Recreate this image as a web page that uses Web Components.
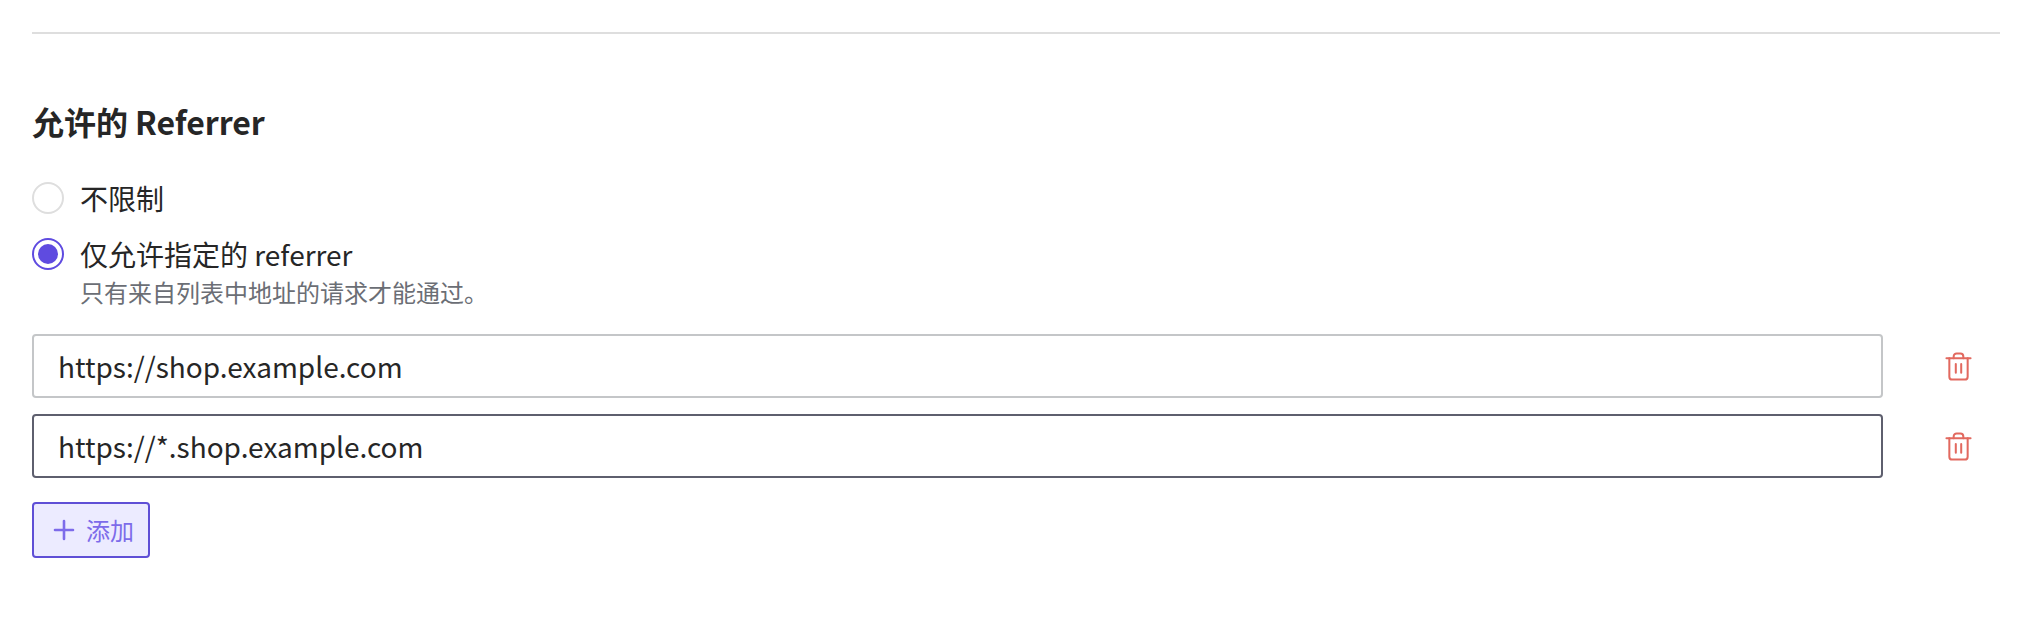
<!DOCTYPE html>
<html lang="zh">
<head>
<meta charset="utf-8">
<style>
html,body{margin:0;background:#fff;}
body{font-family:"Noto Sans CJK SC","Noto Sans",sans-serif;color:#262626;}
</style>
</head>
<body>
<referrer-panel>
  <span slot="title">允许的 Referrer</span>
  <x-radio>不限制</x-radio>
  <x-radio checked hint="只有来自列表中地址的请求才能通过。">仅允许指定的 referrer</x-radio>
  <x-url-row value="https://shop.example.com"></x-url-row>
  <x-url-row value="https://*.shop.example.com" focused></x-url-row>
  <x-add-button>添加</x-add-button>
</referrer-panel>
<script>
class Base extends HTMLElement{
  render(html){ (this.shadowRoot||this.attachShadow({mode:'open'})).innerHTML=html; }
}
customElements.define('referrer-panel',class extends Base{
  connectedCallback(){this.render(`<style>
    :host{display:block;padding:32px 32px 0;box-sizing:border-box;width:2032px;height:630px}
    hr{border:0;height:2px;background:#dedede;margin:0}
    h2{margin:64px 0 0;font-size:32px;line-height:46px;font-weight:600;color:#262626;letter-spacing:-.05px}
    .list{display:flex;flex-direction:column;margin-top:34px}
  </style><hr><h2><slot name="title"></slot></h2><div class="list"><slot></slot></div>`);}
});
customElements.define('x-radio',class extends Base{
  connectedCallback(){
    const c=this.hasAttribute('checked'),h=this.getAttribute('hint');
    this.render(`<style>
    :host{display:grid;grid-template-columns:32px 1fr;column-gap:16px;margin-bottom:${h?26:16}px;font-size:28px;line-height:40px;color:#262626}
    .dot{width:32px;height:32px;box-sizing:border-box;border-radius:50%;align-self:center;background:#fff;
      border:2.5px solid ${c?'#5f4be0':'#dedede'};display:flex;align-items:center;justify-content:center}
    .dot i{width:20px;height:20px;border-radius:50%;background:#5f4be0}
    .hint{grid-column:2;font-size:24px;line-height:32px;color:#6b6e75;margin-top:2px}
    </style><span class="dot">${c?'<i></i>':''}</span><span class="label"><slot></slot></span>${h?`<span class="hint">${h}</span>`:''}`);
  }
});
customElements.define('x-url-row',class extends Base{
  connectedCallback(){
    const f=this.hasAttribute('focused');
    this.render(`<style>
    :host{display:flex;align-items:center;margin-bottom:16px}
    .box{flex:0 0 1851px;height:64px;box-sizing:border-box;border:2.5px solid ${f?'#5e5f6e':'#c4c6c8'};border-radius:4px;
      padding:0 24px;font-size:28px;display:flex;align-items:center;color:#262626;background:#fff}
    .btn{margin-left:62px;display:flex}
    svg{display:block}
    </style><div class="box">${this.getAttribute('value')}</div>
    <div class="btn"><svg width="27" height="29" viewBox="0 0 28 30" fill="none" stroke="#e2695f" stroke-width="2.1" stroke-linecap="round" stroke-linejoin="round">
    <path d="M1.5 6.5H26.5"/><path d="M9 6.5V4.5C9 2.5 10.5 1.5 12 1.5H16C17.5 1.5 19 2.5 19 4.5V6.5"/>
    <path d="M4.5 6.5V25.5C4.5 27.2 5.6 28.5 7.5 28.5H20.5C22.4 28.5 23.5 27.2 23.5 25.5V6.5"/>
    <path d="M11.2 12.5V21.5"/><path d="M16.8 12.5V21.5"/></svg></div>`);
  }
});
customElements.define('x-add-button',class extends Base{
  connectedCallback(){this.render(`<style>
    :host{display:inline-flex;align-self:flex-start;align-items:center;box-sizing:border-box;width:118px;height:56px;margin-top:8px;
      border:2px solid #5f4fd6;border-radius:4px;background:#ecebff;color:#7d6bea;font-size:24px;padding-left:19px;gap:11px}
    svg{display:block}
    span{position:relative;top:-1px}
    </style><svg width="22" height="22" viewBox="0 0 22 22" stroke="#7d6bea" stroke-width="2.6" stroke-linecap="round"><path d="M11 2V20M2 11H20"/></svg><span><slot></slot></span>`);}
});
</script>
</body>
</html>
